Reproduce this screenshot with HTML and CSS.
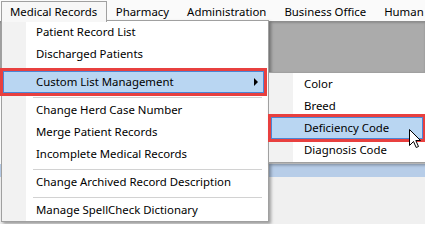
FILE: index.html
```html
<!DOCTYPE html>
<html>
<head>
<meta charset="utf-8">
<link rel="stylesheet" href="styles.css">
</head>
<body>
<div class="app">
  <nav class="menubar">
    <div class="mb-item open">Medical Records</div>
    <div class="mb-item">Pharmacy</div>
    <div class="mb-item">Administration</div>
    <div class="mb-item">Business Office</div>
    <div class="mb-item">Human</div>
  </nav>
  <div class="workspace">
    <div class="ws-gray"></div>
    <div class="ws-panel"></div>
    <div class="ws-strip"></div>
    <div class="ws-rest"></div>
  </div>

  <div class="menu main-menu">
    <div class="item">Patient Record List</div>
    <div class="item">Discharged Patients</div>
    <div class="sep"></div>
    <div class="item hl">Custom List Management<span class="arrow"></span></div>
    <div class="sep"></div>
    <div class="item">Change Herd Case Number</div>
    <div class="item">Merge Patient Records</div>
    <div class="item">Incomplete Medical Records</div>
    <div class="sep"></div>
    <div class="item">Change Archived Record Description</div>
    <div class="sep"></div>
    <div class="item">Manage SpellCheck Dictionary</div>
  </div>

  <div class="menu sub-menu">
    <div class="item">Color</div>
    <div class="item">Breed</div>
    <div class="item hl">Deficiency Code</div>
    <div class="item">Diagnosis Code</div>
  </div>

  <svg class="cursor" width="13" height="20" viewBox="0 0 13 20">
    <path d="M0.5 0.5 L0.5 16.5 L4.5 12.5 L7.2 18.5 L9.5 17.5 L6.8 11.5 L11.5 11.5 Z" fill="#fff" stroke="#000" stroke-width="1" stroke-linejoin="miter"/>
  </svg>
</div>
</body>
</html>
```
FILE: styles.css
```css
html, body {
  margin: 0;
  padding: 0;
}
body {
  width: 425px;
  height: 224px;
  overflow: hidden;
  font-family: "Noto Sans", "Open Sans", sans-serif;
  font-size: 11.4px;
  color: #000;
}
.app {
  position: relative;
  width: 425px;
  height: 224px;
  display: flex;
  flex-direction: column;
}
.menubar {
  height: 21px;
  display: flex;
  align-items: flex-end;
  padding-left: 1px;
  background: #fafafa;
  white-space: nowrap;
  flex: none;
}
.mb-item {
  height: 20px;
  line-height: 19px;
  padding: 0 8.5px 0 7.5px;
  border: 1px solid transparent;
  border-bottom: none;
  box-sizing: border-box;
}
.mb-item.open {
  border-color: #a0a0a0;
  background: #f7f7f7;
  position: relative;
  z-index: 5;
  height: 21px;
  margin-bottom: -1px;
  padding: 0 9px 0 8px;
}
.workspace {
  flex: 1;
  display: flex;
  flex-direction: column;
}
.ws-gray {
  height: 51px;
  background: #ababab;
  box-shadow: inset 0 2px 2px rgba(0,0,0,0.18);
}
.ws-panel {
  height: 92px;
  background: #fff;
}
.ws-strip {
  height: 13px;
  background: #b7cde8;
}
.ws-rest {
  flex: 1;
  background: #f0f0f0;
}
.menu {
  position: absolute;
  box-sizing: border-box;
  border: 1px solid #a0a0a0;
  background: linear-gradient(to right, #f2f2f2 0 24px, #fff 24px);
  box-shadow: 2px 2px 3px rgba(0,0,0,0.35);
  white-space: nowrap;
}
.main-menu {
  left: 1px;
  top: 20px;
  width: 268px;
  z-index: 4;
}
.sub-menu {
  left: 268px;
  top: 72px;
  width: 175px;
  padding-bottom: 1px;
  z-index: 6;
}
.item {
  position: relative;
  height: 22px;
  line-height: 22px;
  padding-left: 34px;
}
.main-menu .item.hl {
  margin: 0 4px 0 1px;
  padding-left: 33px;
}
.sub-menu .item {
  padding-left: 35px;
}
.sub-menu .item.hl {
  margin: 0 19px 0 2px;
  padding-left: 33px;
}
.item.hl {
  background: #b9d6f2;
  box-shadow: inset 0 0 0 1px #4a86d6;
  outline: 3px solid #e8403f;
  z-index: 1;
}
.arrow {
  position: absolute;
  right: 6px;
  top: 7px;
  width: 0;
  height: 0;
  border-left: 4px solid #000;
  border-top: 4px solid transparent;
  border-bottom: 4px solid transparent;
}
.sep {
  height: 4px;
  margin: 0 6px 1px 31px;
  border-bottom: 1px solid #d2d2d2;
}
.cursor {
  position: absolute;
  left: 409px;
  top: 129px;
  z-index: 10;
}
```
